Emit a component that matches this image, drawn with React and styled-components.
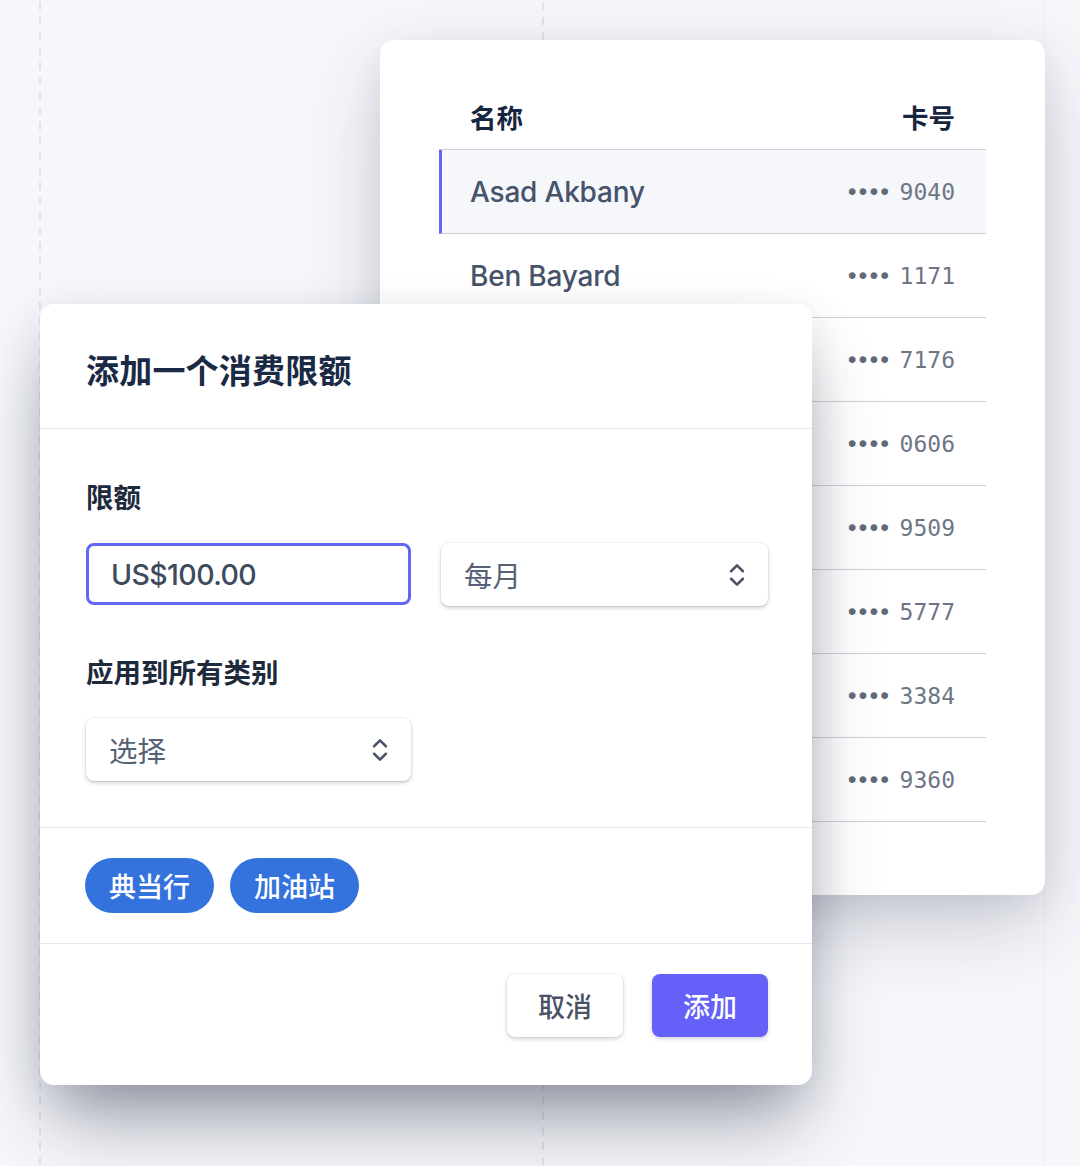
import React from "react";
import styled, { createGlobalStyle } from "styled-components";

const GlobalStyle = createGlobalStyle`
  html, body { margin: 0; padding: 0; }
  body {
    background: #f6f7fb;
    font-family: Inter, "Noto Sans CJK SC", "Noto Sans", sans-serif;
    -webkit-font-smoothing: antialiased;
  }
`;

const Stage = styled.div`
  position: relative;
  width: 1080px;
  height: 1166px;
  overflow: hidden;
  display: grid;
  grid-template-columns: 1fr;
  grid-template-rows: 1fr;
  align-items: start;
  justify-items: start;
  background-color: #f6f7fb;
  background-image:
    linear-gradient(to bottom, #e2e4e9 55%, transparent 55%),
    linear-gradient(to bottom, #e2e4e9 55%, transparent 55%),
    linear-gradient(to right, #eceef2, #eceef2);
  background-size: 2px 15px, 2px 15px, 1px 100%;
  background-repeat: repeat-y, repeat-y, repeat-y;
  background-position: 39px 2px, 542px 2px, 1044px 0;
`;

const CanvasItem = styled.div`
  grid-area: 1 / 1;
  margin-left: ${(p) => p.$x}px;
  margin-top: ${(p) => p.$y}px;
`;

const BackCard = styled.div`
  width: 665px;
  height: 855px;
  box-sizing: border-box;
  background: #ffffff;
  border-radius: 14px;
  padding: 44px 59px 0 59px;
  box-shadow: 0 30px 80px -5px rgba(40, 45, 70, 0.24),
    0 10px 30px rgba(40, 45, 70, 0.07);
`;

const Table = styled.div`
  display: flex;
  flex-direction: column;
`;

const HeaderRow = styled.div`
  display: flex;
  justify-content: space-between;
  align-items: center;
  height: 66px;
  padding: 0 31px;
  border-bottom: 1px solid #cbd1da;
  font-family: "Noto Sans CJK SC", sans-serif;
  font-weight: 700;
  font-size: 26.5px;
  color: #172640;
  box-sizing: border-box;
`;

const Row = styled.div`
  display: flex;
  justify-content: space-between;
  align-items: center;
  height: 83px;
  padding: 0 31px 0 ${(p) => (p.$active ? 28 : 31)}px;
  border-bottom: 1px solid #cbd1da;
  border-left: ${(p) => (p.$active ? "3px solid #6366f1" : "none")};
  background: ${(p) => (p.$active ? "#f5f7fb" : "transparent")};
`;

const Name = styled.span`
  font-family: Inter, sans-serif;
  font-size: 28px;
  font-weight: 500;
  color: #46536a;
  letter-spacing: -0.2px;
`;

const CardNo = styled.span`
  font-family: "DejaVu Sans Mono", monospace;
  font-size: 23px;
  color: #6e7686;
  display: flex;
  align-items: center;
  gap: 11px;
`;

const Dots = styled.span`
  font-size: 23px;
  letter-spacing: -3px;
  color: #626a7a;
`;

const Dialog = styled.div`
  width: 772px;
  height: 781px;
  box-sizing: border-box;
  background: #ffffff;
  border-radius: 14px;
  display: flex;
  flex-direction: column;
  box-shadow: 0 45px 70px -15px rgba(30, 35, 60, 0.45),
    0 10px 40px rgba(30, 35, 60, 0.1);
`;

const DialogHeader = styled.div`
  height: 125px;
  box-sizing: border-box;
  padding: 0 46px;
  display: flex;
  align-items: center;
  border-bottom: 1.5px solid #e6eaf0;
`;

const Title = styled.h2`
  margin: 0;
  font-family: "Noto Sans CJK SC", sans-serif;
  font-size: 33px;
  font-weight: 700;
  color: #1a2a45;
  letter-spacing: 0.2px;
  padding-top: 6px;
`;

const DialogBody = styled.div`
  display: grid;
  grid-template-columns: 325px 327px;
  column-gap: 30px;
  padding: 49px 44px 46px 46px;
  border-bottom: 1.5px solid #e6eaf0;
`;

const Field = styled.div`
  display: flex;
  flex-direction: column;
  gap: 29px;
  grid-column: ${(p) => p.$span || "auto"};
  margin-top: ${(p) => p.$mt || 0}px;
`;

const Label = styled.label`
  font-family: "Noto Sans CJK SC", sans-serif;
  font-size: 27.5px;
  font-weight: 700;
  color: #1d2a3c;
  line-height: 36px;
  height: 36px;
`;

const FieldRow = styled.div`
  display: grid;
  grid-template-columns: 325px 327px;
  column-gap: 30px;
`;

const Input = styled.div`
  height: 62px;
  box-sizing: border-box;
  border: 3px solid #6366f1;
  border-radius: 8px;
  padding: 0 22px;
  display: flex;
  align-items: center;
  font-family: Inter, sans-serif;
  font-size: 28.5px;
  font-weight: 500;
  color: #3e4a5d;
  letter-spacing: -0.6px;
`;

const Select = styled.div`
  height: 63px;
  box-sizing: border-box;
  border-radius: 8px;
  background: #fff;
  padding: 0 22px 0 23px;
  display: flex;
  align-items: center;
  justify-content: space-between;
  box-shadow: 0 0 0 1px rgba(20, 30, 50, 0.04),
    0 2px 4px rgba(20, 30, 50, 0.2), 0 1px 1px rgba(20, 30, 50, 0.06);
  font-family: "Noto Sans CJK SC", sans-serif;
  font-size: 28.5px;
  font-weight: 400;
  color: #566176;
`;

const ChipBar = styled.div`
  display: flex;
  gap: 16px;
  padding: 30px 46px 30px 45px;
  border-bottom: 1.5px solid #e6eaf0;
`;

const Chip = styled.span`
  height: 55px;
  width: 129px;
  border-radius: 28px;
  background: #3473dd;
  color: #ffffff;
  display: flex;
  align-items: center;
  justify-content: center;
  font-family: "Noto Sans CJK SC", sans-serif;
  font-size: 27px;
  font-weight: 500;
`;

const Footer = styled.div`
  display: flex;
  justify-content: flex-end;
  gap: 29px;
  padding: 30px 44px 0 0;
`;

const Button = styled.button`
  width: 116px;
  height: 63px;
  border: none;
  border-radius: 8px;
  font-family: "Noto Sans CJK SC", sans-serif;
  font-size: 27px;
  font-weight: 500;
  cursor: pointer;
  background: ${(p) => (p.$primary ? "#6560f7" : "#ffffff")};
  color: ${(p) => (p.$primary ? "#ffffff" : "#4a5365")};
  box-shadow: ${(p) =>
    p.$primary
      ? "0 2px 4px rgba(40, 40, 120, 0.2)"
      : "0 0 0 1px rgba(20,30,50,0.04), 0 2px 4px rgba(20, 30, 50, 0.2)"};
`;

const Chevrons = () => (
  <svg width="18" height="28" viewBox="0 0 16 26" fill="none">
    <polyline
      points="2.5,9.5 8,4 13.5,9.5"
      stroke="#4b5567"
      strokeWidth="2.4"
      strokeLinecap="round"
      strokeLinejoin="round"
    />
    <polyline
      points="2.5,16.5 8,22 13.5,16.5"
      stroke="#4b5567"
      strokeWidth="2.4"
      strokeLinecap="round"
      strokeLinejoin="round"
    />
  </svg>
);

const rows = [
  ["Asad Akbany", "9040"],
  ["Ben Bayard", "1171"],
  ["Clara Chen", "7176"],
  ["Diego Díaz", "0606"],
  ["Emma Evans", "9509"],
  ["Farah Fox", "5777"],
  ["Grace Gill", "3384"],
  ["Hiro Hayashi", "9360"],
];

export default function App() {
  return (
    <>
      <GlobalStyle />
      <Stage>
        <CanvasItem $x={380} $y={40}>
          <BackCard>
            <Table>
              <HeaderRow>
                <span>名称</span>
                <span>卡号</span>
              </HeaderRow>
              {rows.map(([name, no], i) => (
                <Row key={no} $active={i === 0}>
                  <Name>{name}</Name>
                  <CardNo>
                    <Dots>••••</Dots>
                    <span>{no}</span>
                  </CardNo>
                </Row>
              ))}
            </Table>
          </BackCard>
        </CanvasItem>
        <CanvasItem $x={40} $y={304}>
          <Dialog>
            <DialogHeader>
              <Title>添加一个消费限额</Title>
            </DialogHeader>
            <DialogBody>
              <Field $span="1 / span 2">
                <Label>限额</Label>
                <FieldRow>
                  <Input>US$100.00</Input>
                  <Select>
                    <span>每月</span>
                    <Chevrons />
                  </Select>
                </FieldRow>
              </Field>
              <Field $span="1 / span 1" $mt={47}>
                <Label>应用到所有类别</Label>
                <Select>
                  <span>选择</span>
                  <Chevrons />
                </Select>
              </Field>
            </DialogBody>
            <ChipBar>
              <Chip>典当行</Chip>
              <Chip>加油站</Chip>
            </ChipBar>
            <Footer>
              <Button>取消</Button>
              <Button $primary>添加</Button>
            </Footer>
          </Dialog>
        </CanvasItem>
      </Stage>
    </>
  );
}
